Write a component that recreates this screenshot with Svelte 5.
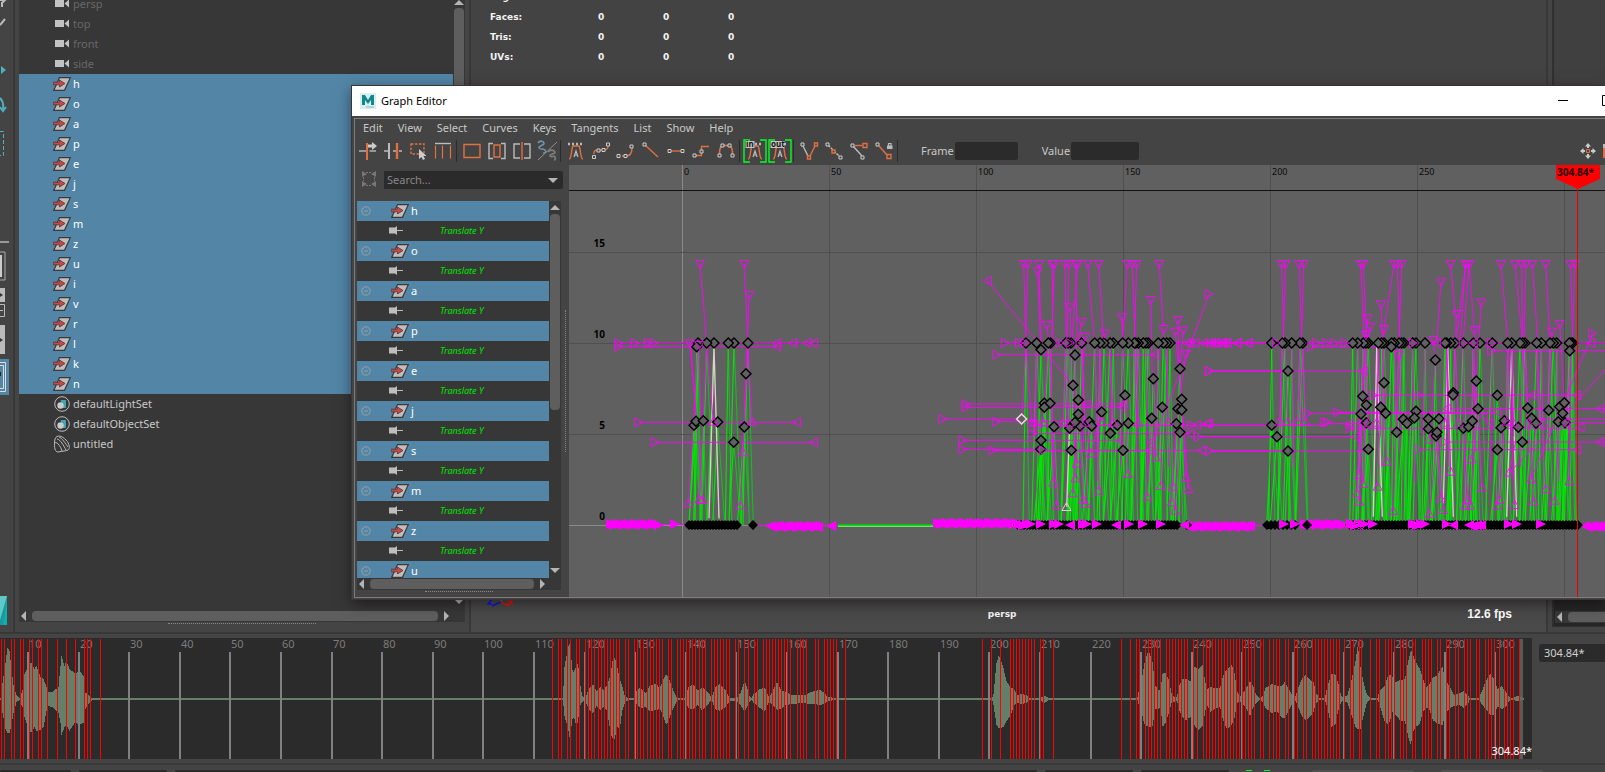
<script>
  const cameras = ['persp', 'top', 'front', 'side'];
  const letters = ['h', 'o', 'a', 'p', 'e', 'j', 's', 'm', 'z', 'u', 'i', 'v', 'r', 'l', 'k', 'n'];
  const channels = letters.slice(0, 10);
  const menus = ['Edit', 'View', 'Select', 'Curves', 'Keys', 'Tangents', 'List', 'Show', 'Help'];
  const stats = ['Edges:', 'Faces:', 'Tris:', 'UVs:'];
  const toolGroups = [
    ['insert', 'add', 'lattice', 'region'],
    ['frameall', 'frameplay', 'center', 'buffer'],
    ['auto', 'spline', 'clamped', 'linear', 'flat', 'step', 'plateau'],
    ['in', 'out'],
    ['break', 'unify', 'free', 'lock']
  ];

  /* ---------- time slider ---------- */
  const tickX = (f) => Math.round(27 + (f - 10) * 5.06);
  const frames = Array.from({ length: 30 }, (_, i) => (i + 1) * 10);

  const from = (origin, scale, list) => list.map((v) => Math.floor(origin + v / scale));
  const keyLines = [
    1, 4, 11, 14, 20, 23, 29, 32, 38, 41, 47, 57, 66, 75, 84, 87, 90, 100,
    ...from(540, 2.851, [35, 52, 61, 78, 86, 104, 112, 129, 138, 146, 155, 166, 175, 184, 192, 200, 209, 217, 226, 243, 252, 269, 278, 286, 294, 306, 314, 323, 332, 340, 349, 366, 375, 392, 400, 409, 417, 426, 434, 443, 454, 462, 471, 488, 497, 506, 514, 523, 531, 540, 557, 565, 582, 594, 611, 620, 637, 645, 654, 662, 671, 679, 688, 697, 705, 714, 734, 742, 751, 759, 785, 794, 811, 819, 828, 836, 845, 871, 1261, 1287, 1312, 1341, 1350, 1358, 1367, 1375, 1384, 1392, 1401, 1410, 1427, 1435, 1464]),
    ...from(1070, 2.931, [150, 177, 194, 203, 221, 230, 238, 247, 256, 265, 282, 291, 300, 309, 318, 326, 335, 344, 361, 373, 391, 399, 408, 417, 425, 434, 443, 452, 461, 470, 479, 488, 496, 505, 514, 523, 532, 541, 558, 567, 584, 596, 605, 613, 631, 640, 657, 666, 684, 693, 710, 719, 728, 737, 746, 754, 763, 772, 781, 790, 804, 822, 831, 848, 854, 880, 898, 907, 924, 933, 942, 951, 968, 977, 986, 1003, 1012, 1033, 1042, 1050, 1059, 1077, 1086, 1103, 1112, 1129, 1138, 1156, 1164, 1173, 1191, 1200, 1217, 1226, 1235, 1244, 1258, 1273, 1282, 1290, 1299, 1317])
  ];

  // audio envelope: position, level above, level below
  const parse = (s, o, k) => s.split(' ').map((t) => { const [x, u, d] = t.split(',').map(Number); return [o + x / k, u, d]; });
  const envelope = [
    ...parse('0,1,1 2,16,14 5,36,30 7,51,34 9,48,34 11,30,26 13,14,14 16,4,3 19,1,1 22,9,8 24,25,18 29,36,33 31,36,33 34,30,28 36,33,32 40,22,31 43,20,28 46,12,12 48,7,7 52,7,8 58,12,14 60,33,24 61,43,36 64,33,28 66,38,26 69,30,32 74,26,24 80,27,25 83,23,24 85,6,10 87,5,6 91,1,2 92,1,1', 0, 1),
    ...parse('64,1,1 68,31,17 75,45,25 82,56,35 84,54,44 88,40,28 92,26,18 96,28,19 103,33,28 107,36,22 112,18,8 118,4,3 127,1,1 138,10,11 150,15,14 160,8,7 170,12,11 180,9,8 190,14,12 200,25,35 206,40,40 212,41,40 218,33,28 226,20,30 233,13,12 240,3,4 250,1,1 268,1,1 275,10,6 285,11,9 300,6,8 312,14,12 330,15,11 340,11,10 350,19,17 358,25,26 365,22,22 372,15,15 383,5,6 390,1,1 412,1,1 422,12,9 434,15,11 448,9,6 460,11,11 470,10,8 483,4,3 488,1,1 497,12,10 512,15,12 525,10,9 535,4,4 540,1,2 560,1,2 570,6,6 582,18,13 588,12,8 597,2,2 602,1,1 608,5,4 625,10,9 640,11,12 652,1,2 660,7,6 675,17,11 685,9,10 700,7,6 715,4,5 755,4,4 765,6,5 780,8,5 797,9,6 810,6,5 818,2,2 845,1,1 1288,1,1 1292,6,7 1300,36,26 1306,43,29 1312,40,29 1320,31,28 1328,18,22 1340,12,17 1350,10,7 1358,4,4 1370,5,5 1385,4,4 1395,1,1 1425,1,1 1437,3,4 1450,1,1', 540, 2.851),
    ...parse('196,1,1 200,8,6 208,17,12 216,35,25 228,49,28 240,38,28 248,14,10 258,9,10 264,10,8 270,26,28 278,26,24 288,20,14 296,6,4 305,2,3 312,2,2 318,13,11 328,20,18 338,20,21 352,18,18 358,30,20 365,32,28 375,30,31 388,34,27 395,17,12 400,10,6 410,12,13 425,11,9 438,11,8 446,22,20 458,30,30 472,34,26 480,28,20 488,8,5 496,2,2 505,6,5 515,11,9 526,18,17 535,13,9 545,4,4 555,1,1 562,2,2 572,11,9 590,15,14 605,13,12 620,13,19 627,17,19 640,10,12 652,3,2 658,1,1 665,9,6 678,20,17 690,24,21 705,18,17 712,17,13 720,6,4 728,1,1 745,1,1 752,11,8 765,25,28 776,25,26 786,14,10 793,4,4 800,1,1 812,4,4 822,17,14 835,37,28 842,54,30 850,32,30 860,15,15 868,5,4 878,1,1 900,1,1 905,8,5 920,13,22 932,25,26 945,22,12 953,17,16 968,19,22 980,20,22 990,38,38 998,49,46 1003,45,34 1012,37,28 1024,30,25 1032,22,13 1042,12,9 1050,13,9 1062,22,21 1073,23,24 1090,32,26 1100,18,14 1112,12,9 1125,4,7 1140,6,6 1153,8,9 1165,4,5 1170,1,1 1197,1,1 1205,7,5 1217,18,10 1230,25,16 1240,21,16 1252,10,8 1264,13,10 1278,6,7 1285,2,2 1298,1,1 1310,3,2 1330,1,1', 1070, 2.931)
  ];
  let wave = '';
  for (let i = 0, x = 0; x < 1524; x++) {
    while (i < envelope.length - 2 && envelope[i + 1][0] < x) i++;
    const [x0, u0, d0] = envelope[i];
    const [x1, u1, d1] = envelope[i + 1];
    const t = Math.min(1, Math.max(0, (x - x0) / (x1 - x0)));
    const u = Math.round(u0 + (u1 - u0) * t);
    const d = Math.round(d0 + (d1 - d0) * t);
    wave += `M${x} ${61 - u}h1v${u + d}h-1z`;
  }

  /* ---------- animation curves ---------- */
  // Three clusters of keys, each in thirds of a pixel from its own origin.
  const clusters = [
    {
      ox: 350, oy: 190, top: 459, base: 1006,
      tops: [1044, 1070, 1092, 1135, 1152, 1194],
      keys: '1040,470 1032,706 1038,694 1060,692 1103,696 1183,711 1188,551 1151,757',
      downs: '1050,222,1070,459 1183,222,1194,459 1198,315,1187,551 1020,460,1040,690 1048,465,1052,690',
      ups: '1015,940,1044,470 1048,928,1070,470 1058,930,1022,470 1171,947,1194,470 1179,787,1188,551 1206,695,1194,470 1090,695,1070,470',
      rights: '806,459 806,470 855,459 895,459 912,459 866,697 915,757',
      lefts: '1280,459 1280,470 1328,459 1371,459 1391,459 1340,697 1391,757',
      lines: '806,459,1391,459 806,470,1280,470 866,697,1340,697 915,757,1391,757',
      pale: '1077,985,1092,470 1092,470,1107,985'
    },
    {
      ox: 900, oy: 240, top: 309, base: 856,
      tops: [378, 410, 445, 452, 497, 505, 513, 545, 584, 600, 612, 630, 640, 668, 685, 703, 707, 715, 730, 738, 745, 775, 790, 800, 810],
      keys: '423,329 525,345 519,436 760,416 840,386 675,466 535,480 433,490 450,490 433,502 787,502 845,478 605,516 834,506 845,510 535,523 462,560 509,565 540,558 568,545 575,558 525,547 652,556 685,550 755,535 631,580 829,551 840,577 422,628 423,601 514,631 669,631',
      downs: '371,72,378,300 383,72,377,300 417,72,424,325 413,94,422,325 457,72,458,300 463,72,455,300 495,72,499,300 507,72,501,300 527,72,531,300 533,72,516,300 563,72,583,300 596,72,610,300 682,72,668,300 697,72,705,300 710,72,703,300 778,72,790,260 440,255,447,309 510,202,513,309 545,245,535,309 555,290,545,440 614,280,608,309 666,232,669,309 752,180,757,416 791,267,790,309 834,240,838,386 826,275,845,478 850,271,840,386 858,342,834,506',
      ups: '405,545,410,309 395,548,378,309 430,548,445,309 490,548,497,309 508,548,513,309 555,548,545,309 605,545,600,309 640,548,630,309 715,548,707,309 805,545,800,309 460,728,450,309 470,797,455,490 530,671,525,345 526,715,519,436 518,760,535,480 550,780,540,558 557,792,568,545 596,752,584,309 684,702,675,466 768,652,760,416 782,738,787,502 742,770,755,535 818,740,834,506 858,713,845,510 865,747,845,478 815,787,829,551 825,812,840,577 572,640,605,516',
      rights: '316,309 358,309 375,309 480,309 510,309 540,309 290,344 198,492 198,502 128,537 290,545 415,560 398,581 188,601 188,628 278,631 430,631 895,590 930,633 928,393 927,162 875,555',
      lefts: '860,309 870,309 885,309 910,309 935,309 950,309 965,309 980,309 1012,309 1045,309 765,344 560,492 670,492 665,502 890,556 920,551 870,581 660,601 750,631 905,631 262,122 755,605',
      lines: '316,309,1110,309 290,344,765,344 198,492,670,492 198,502,665,502 128,537,365,537 290,545,510,545 415,556,1115,556 398,581,870,581 895,590,1130,590 188,601,660,601 188,628,422,628 278,631,905,631 278,632,750,632 930,633,1163,633 928,393,1163,393 262,122,519,436 927,162,840,400 840,400,755,610 365,537,378,309',
      pale: '508,580,500,800'
    },
    {
      ox: 1200, oy: 240, top: 309, base: 856,
      tops: [215, 247, 255, 275, 300, 308, 458, 473, 490, 498, 505, 535, 545, 552, 575, 583, 597, 605, 612, 638, 648, 675, 735, 740, 752, 765, 790, 820, 840, 877, 923, 935, 960, 968, 975, 1010, 1024, 1050, 1060, 1070, 1108, 1113, 1118],
      keys: '264,393 552,428 706,360 574,320 488,469 499,495 542,502 557,520 483,522 760,458 759,465 829,423 892,466 834,506 648,514 643,534 610,538 621,550 685,536 717,536 685,566 708,588 711,577 590,577 215,556 231,590 264,633 499,548 505,628 790,565 806,560 817,543 903,563 913,542 892,629 967,606 983,504 995,535 1008,550 955,562 1046,511 1079,500 1093,488 1075,545 1095,548 1088,520 1109,332',
      downs: '245,72,251,300 257,72,250,300 298,72,305,300 311,72,304,300 482,72,493,300 490,72,500,300 582,72,553,265 592,72,599,300 605,72,597,300 752,72,765,220 797,72,780,300 797,72,768,300 807,72,823,270 807,72,790,300 903,72,923,300 945,72,967,300 965,72,968,300 978,72,972,300 997,72,1013,300 1037,72,1050,300 1112,72,1118,300 1125,72,1117,300 723,125,710,300 543,193,547,300 552,267,545,500 769,222,767,309 844,187,829,420 823,270,815,540 502,235,495,309 511,260,505,309 1079,252,1093,488 1056,275,1046,511 497,285,488,469 700,300,706,360 598,345,590,577',
      ups: '239,545,247,309 263,545,255,309 293,545,300,309 317,545,308,309 505,548,498,309 530,548,535,309 735,548,740,309 775,548,765,309 920,545,923,309 940,548,935,309 985,548,975,309 1030,548,1024,309 1100,548,1113,309 560,665,552,428 478,705,488,469 490,732,499,495 533,740,542,502 470,760,483,522 478,785,490,309 580,813,597,309 689,598,706,360 752,695,740,309 815,658,829,423 722,775,708,588 730,810,711,577 688,822,717,536 804,780,790,565 795,797,790,309 810,797,834,506 846,742,820,309 899,780,913,542 892,797,903,563 944,795,923,309 1001,785,968,309 1037,747,1010,309 1064,782,1079,500 1108,723,1113,309 993,718,1008,550 928,698,955,562',
      rights: '350,309 380,309 405,309 435,309 230,309 640,309 790,309 335,320 28,393 522,466 658,466 323,520 413,517 383,547 375,547 450,565 735,606 655,629 875,332 1178,280 875,309',
      lefts: '25,309 45,309 70,309 80,309 112,309 145,309 1172,309 490,393 995,466 1130,466 890,517 850,530 450,550 450,560 870,550 1140,562 465,590 1200,606 1130,629 740,506 1200,506 25,551 710,309 820,309',
      lines: '0,309,1250,309 335,320,574,320 28,393,490,393 522,466,1140,466 323,520,890,520 413,517,850,517 375,551,480,551 0,556,380,556 450,565,1140,565 0,590,465,590 735,606,1250,606 30,633,505,633 655,629,1130,629 875,332,1250,332 750,506,1250,506 980,537,1250,537 1080,548,1250,548 928,698,1080,540 1080,540,1250,350 993,718,1178,280',
      pale: '520,830,530,320 530,320,547,830 730,790,743,320 743,320,760,830 920,830,935,330 935,330,950,830'
    }
  ];
  const nums = (s) => s.split(' ').map((t) => t.split(',').map(Number));
  const r1 = (v) => Math.round(v * 10) / 10;

  let greens = '', greensSoft = '', pales = '', magentas = '', handles = '';
  const diamonds = [];
  for (const c of clusters) {
    const X = (v) => r1(c.ox + v / 3);
    const Y = (v) => r1(c.oy + v / 3);
    const keys = [...c.tops.map((x) => [x, c.top]), ...nums(c.keys)];
    keys.forEach(([x, y], i) => {
      const a = 9 + ((i * 7) % 3) * 6;
      const b = 10 + ((i * 5) % 3) * 6;
      greens += `M${X(x - a)} ${Y(c.base)}L${X(x)} ${Y(y)}`;
      greensSoft += `M${X(x)} ${Y(y)}L${X(x + b)} ${Y(c.base)}`;
      if (y > c.top) diamonds.push([X(x), Y(y)]);
      else diamonds.unshift([X(x), Y(y)]);
      if (c.tops.length > 9 && y === c.top && i % 2) magentas += `M${X(x)} ${Y(y)}L${X(x + (i % 4) * 6 - 12)} ${Y(545 + (i % 5) * 45)}`;
    });
    for (const [x1, y1, x2, y2] of nums(c.pale)) pales += `M${X(x1)} ${Y(y1)}L${X(x2)} ${Y(y2)}`;
    for (const [x1, y1, x2, y2] of [...nums(c.lines), ...nums(c.downs), ...nums(c.ups)])
      magentas += `M${X(x1)} ${Y(y1)}L${X(x2)} ${Y(y2)}`;
    for (const [x, y] of nums(c.downs)) handles += `M${X(x) - 4.5} ${Y(y) - 3.5}h9l-4.5 8z`;
    for (const [x, y] of nums(c.ups)) handles += `M${X(x) - 4.5} ${Y(y) + 3.5}h9l-4.5 -8z`;
    for (const [x, y] of nums(c.rights)) handles += `M${X(x) - 4} ${Y(y) - 4.5}v9l8 -4.5z`;
    for (const [x, y] of nums(c.lefts)) handles += `M${X(x) + 4} ${Y(y) - 4.5}v9l-8 -4.5z`;
  }

  let solid = '', baseKeys = '', overlay = '';
  const right = (x, y) => `M${x} ${y - 5}v10l10 -5z`;
  const left = (x, y) => `M${x} ${y - 5}v10l-10 -5z`;
  const diamond = (x, y, r = 5) => `M${x - r} ${y}l${r} -${r}l${r} ${r}l-${r} ${r}z`;
  const arrows = (shape, a, b, y, s = 3) => { let d = ''; for (let x = a, i = 0; x < b; x += s, i++) d += shape(x, y + (i % 3 === 1 ? 1 : 0)); return d; };
  solid += arrows(right, 606, 656, 524) + right(670, 524);
  solid += arrows(left, 775, 826, 526) + left(836, 526);
  solid += arrows(right, 933, 1012, 523);
  solid += arrows(left, 1192, 1258, 526);
  solid += arrows(right, 1300, 1342, 524) + arrows(left, 1590, 1612, 526);
  const runs = [[689, 740, 3], [753, 754, 3], [1018, 1178, 3], [1187, 1188, 3], [1267, 1299, 4], [1307, 1308, 3], [1350, 1580, 3]];
  for (const [a, b, s] of runs) for (let x = a; x < b; x += s) baseKeys += diamond(x, 525, 5);
  const mixed = [1040, 1053, 1058, 1070, 1082, 1086, 1096, 1116, 1128, 1142, 1160, 1184, 1283, 1294, 1351, 1358, 1364, 1372, 1446, 1453, 1508, 1516, 1540];
  overlay += mixed.map((x, i) => (i % 4 === 3 ? left(x + 5, 525) : right(x - 4, 524))).join('');
  overlay += arrows(right, 1014, 1030, 524, 4) + arrows(right, 1346, 1362, 524, 4) + arrows(right, 1408, 1424, 524, 4) + arrows(left, 1474, 1490, 525, 4);

  const gridX = [0, 50, 100, 150, 200, 250, 300].map((f) => ({ f, x: 682 + (f / 50) * 147 }));
  const gridY = [15, 10, 5, 0].map((v) => ({ v, y: 525 - Math.round(v * 18.2) }));
</script>

{#snippet transformIcon()}
  <svg class="xf" width="18" height="14" viewBox="0 0 18 14" aria-hidden="true">
    <path d="M6.500.7h10.800L11.500 13.300H.8z" fill="#c2bdbd" stroke="#3a3a3a" stroke-width="1.200" />
    <path d="M0 5.200h6.500V3l5.500 3.500L6.500 10V7.800H0z" fill="#d04545" stroke="#4a3a3a" stroke-width=".8" />
  </svg>
{/snippet}

{#snippet tool(name)}
  <svg width="24" height="24" viewBox="0 0 24 24" fill="none" stroke="#e07040" stroke-width="1.400" aria-hidden="true">
    {#if name === 'insert'}
      <path d="M3 12h17" stroke="#bbb" /><path d="M12 4v17" stroke-width="3" stroke="#444" /><path d="M11 4v17" stroke-width="2" /><path d="M12 5.500h4V3l5 4-5 4V8.500h-4z" fill="#ccc" stroke="none" />
    {:else if name === 'add'}
      <path d="M3 12h5M12 12h3M18 12h3" stroke="#bbb" /><path d="M8 4v16" stroke="#bbb" stroke-width="2" /><path d="M16 4v16" stroke-width="2.400" />
    {:else if name === 'lattice'}
      <path d="M5 5h13v10H5z" stroke-dasharray="2.500 1.500" /><path d="M13 10v10l2.500-2 1.500 3 2-1-1.500-3h3z" fill="#ccc" stroke="none" />
    {:else if name === 'region'}
      <path d="M4 4.500h16" stroke="#bbb" /><path d="M4.500 6.500v13M11.500 6.500v13M19.500 6.500v13" stroke-width="1.200" />
    {:else if name === 'frameall'}
      <path d="M4 5.500h16v13H4z" />
    {:else if name === 'frameplay'}
      <path d="M8 4.500H4v15h4M16 4.500h4v15h-4" stroke="#bbb" /><path d="M9 6h6v12H9z" />
    {:else if name === 'center'}
      <path d="M10 5H4v14h6M14 5h6v14h-6" stroke="#bbb" /><path d="M12 3v18" />
    {:else if name === 'buffer'}
      <path d="M3 4c2-3 5-2 6 0s-6 3-5 5 4 0 6 2 0 3-2 3" stroke="#7191ad" stroke-width="1.600" /><path d="M22 3 3 21" stroke="#999" stroke-width=".9" /><path d="M13 13c2-3 6-2 7 0s-6 2-5 4 4-1 5 1 0 3-1 3" stroke="#808080" stroke-width="1.600" />
    {:else if name === 'auto' || name === 'in' || name === 'out'}
      <path d="M5 20c3 0 2-10 4-13h6c2 3 1 13 4 13" /><path d="m10 18 2-6 2 6M10.500 16h3" stroke="#bbb" stroke-width="1.200" /><path d="M4 5h16" stroke="#bbb" stroke-dasharray="2 2" stroke-width="2.500" />
      {#if name !== 'auto'}
        <path d="M7 1H1v22h6M17 1h6v22h-6" stroke="#0f2" />
        <rect x="2.500" y="2" width={name === 'in' ? 9 : 14} height="7" fill="#c4c4c4" stroke="none" />
        <text x="3" y="8" fill="#111" stroke="none" font-size="8" font-weight="700">{name}</text>
      {/if}
    {:else if name === 'spline'}
      <path d="M5 15v-1c0-3 2-3 5-3h4c4 0 5-1 5-4" /><path d="M3.500 16.500h3v3h-3zM8 10h3v3H8zM13 9.500h3v3h-3zM17.500 4h3v3h-3z" fill="#444" stroke="#ccc" stroke-width="1" />
    {:else if name === 'clamped'}
      <path d="M8 17h4c5 0 6-4 6-8" /><path d="M3 15.500h3v3H3zM10 15.500h3v3h-3zM16 6h3v3h-3z" fill="#444" stroke="#ccc" stroke-width="1" />
    {:else if name === 'linear'}
      <path d="m6 6 13 12" /><path d="M4 4h3v3H4z" fill="#444" stroke="#ccc" stroke-width="1" />
    {:else if name === 'flat'}
      <path d="M7 12h10" /><path d="M4 10.500h3v3H4zM17 10.500h3v3h-3z" fill="#444" stroke="#ccc" stroke-width="1" />
    {:else if name === 'step'}
      <path d="M7 16.500h5.500v-9H20" /><path d="M4 15h3v3H4zM11 11h3v3h-3z" fill="#444" stroke="#ccc" stroke-width="1" />
    {:else if name === 'plateau'}
      <path d="M5.500 15c0-4 0-7 3-8.500h7c3 1.500 3 4.500 3 8.500" /><path d="M4 15h3v3H4zM7 5h3v3H7zM14 5h3v3h-3zM17 15h3v3h-3z" fill="#444" stroke="#ccc" stroke-width="1" />
    {:else if name === 'break'}
      <path d="m6 7 5 10" stroke="#bbb" /><path d="m18 7-5 10" /><path d="M4 4h3v3H4z" fill="#444" stroke="#ccc" stroke-width="1" /><path d="M17.500 4h3v3h-3zM10.500 17h3v3h-3z" fill="#444" />
    {:else if name === 'unify'}
      <path d="m6 6 12 12" stroke="#bbb" stroke-dasharray="3 1" /><path d="M4 4h3v3H4zM17 17h3v3h-3z" fill="#444" stroke="#ccc" stroke-width="1" /><path d="M10 11h3v3h-3z" fill="#444" />
    {:else if name === 'free'}
      <path d="m6 7 9 10" stroke="#bbb" /><path d="M8 6.500h7" /><path d="M4 5h3v3H4zM14 17h3v3h-3z" fill="#444" stroke="#ccc" stroke-width="1" /><path d="M16 4.500h4v4h-4z" fill="#444" />
    {:else}
      <path d="m7 7 8 9" /><path d="M4 4h3v3H4z" fill="#444" stroke="#ccc" stroke-width="1" /><path d="M15 15.500h4v4h-4z" fill="#444" /><path d="M15 6.500h5.500V10H15z" fill="#bbb" stroke="none" /><path d="M16.500 7V4.500H19V7" stroke="#bbb" stroke-width="1.200" />
    {/if}
  </svg>
{/snippet}

<div class="app">
  <main class="workspace">
    <svg class="toolbox" width="13" height="632" aria-hidden="true">
      <path d="M0 0h5l-3 3v4M0 25l5-6" stroke="#bbb" stroke-width="2" fill="none" />
      <path d="M1 66l5 4-5 4z" fill="#4fb0bf" />
      <path d="M0 98q4 4 3 11M0 107l3 4 3-4" stroke="#4fb0bf" stroke-width="2" fill="none" />
      <path d="M0 131.500h3.500v24H0" stroke="#4fb0bf" fill="none" stroke-dasharray="4 2" />
      <path d="M0 242h9" stroke="#999" stroke-width="2" />
      <path d="M0 252h5v28H0" stroke="#aaa" fill="none" /><path d="M0 255h2v22H0z" fill="#ccc" />
      <path d="M0 288h5v14H0zM0 325h5v29H0z" fill="#bbb" /><path d="M0 293l3 2-3 2zM0 338l3 2-3 2z" fill="#333" />
      <path d="M0 304.500h4.500v12H0M0 310.500h3" stroke="#bbb" fill="none" />
      <path d="M0 359h9v36H0z" fill="#5285a6" /><path d="M0 362.500h5.500v29H0M0 365.500h3.500v23H0" stroke="#ddd" fill="none" /><path d="M0 372h1v4H0z" fill="#222" />
      <path d="M0 596h7v29H0z" fill="#1a9a9a" /><path d="M0 596h7L0 620z" fill="#5fc8c8" /><path d="M7 600v25H3z" fill="#0bb0b0" />
    </svg>

    <section class="outliner" aria-label="Outliner">
      <div class="treebox">
        <ul class="tree">
          {#each cameras as c}
            <li class="row dim">
              <svg width="18" height="14" viewBox="0 0 18 14" aria-hidden="true"><path d="M2 3h9v7H2zM11.500 6.500 16 2.500v8z" fill="#c2c2c2" /></svg>{c}
            </li>
          {/each}
          {#each letters as l}<li class="row on">{@render transformIcon()}{l}</li>{/each}
          {#each ['defaultLightSet', 'defaultObjectSet'] as s}
            <li class="row">
              <svg width="18" height="16" viewBox="0 0 18 16" aria-hidden="true"><circle cx="9" cy="8" r="7.300" fill="none" stroke="#bdbdbd" /><path d="M7.500 4h5.500v8h-3z" fill="#3fa5b0" /><circle cx="7.500" cy="9.500" r="3.200" fill="#ccc" /></svg>{s}
            </li>
          {/each}
          <li class="row">
            <svg width="18" height="18" viewBox="0 0 18 18" fill="none" stroke="#bdbdbd" aria-hidden="true"><path d="M2 4C4-1 9 1 13 5s4 9 2 10-5 1-10 2C1 17 1 9 2 4z" /><path d="M2 8c2-2 6 4 7 8M4 4c3 0 7 7 9 11M6 2c3 1 6 6 9 10" /></svg>untitled
          </li>
        </ul>
        <div class="vbar">
          <span class="arrow up"></span><span class="thumb"></span><span class="arrow down"></span>
        </div>
      </div>
      <div class="hbar"><span class="arrow left"></span><span class="thumb"></span><span class="arrow right"></span><span class="corner"></span></div>
      <div class="dots wide"></div>
    </section>

    <section class="viewport" aria-label="Viewport">
      <table class="stats">
        <tbody>
          {#each stats as s}<tr><th scope="row">{s}</th><td>0</td><td>0</td><td>0</td></tr>{/each}
        </tbody>
      </table>
      <div class="viewfoot">
        <svg width="28" height="14" viewBox="0 0 28 14" fill="none" aria-hidden="true"><path d="M14 1v3" stroke="#0c0" /><path d="m14 4-9 4M1 1h4L1 6h4" stroke="#11e" stroke-width="1.500" /><path d="m14 4 8 4M21 2l5 5M26 2l-5 5" stroke="#e11" stroke-width="1.500" /></svg>
        <span class="cam">persp</span><span class="fps">12.6 fps</span>
      </div>
    </section>

    <aside class="side"><div class="sidebar"><div class="hbar"><span class="arrow left"></span><span class="thumb"></span></div></div></aside>

    <section class="editor" aria-label="Graph Editor">
      <header class="titlebar">
        <svg width="16" height="16" viewBox="0 0 16 16" aria-hidden="true"><path d="M0 0h16v16H0z" fill="#d9eeee" /><path d="M2 12V2h3l3 5 3-5h3v10h-3V7l-3 4-3-4v5z" fill="#12888c" /><path d="M6 14h8" stroke="#7bc1c3" /></svg>
        <h1>Graph Editor</h1>
        <button class="win" aria-label="Minimize"><svg width="12" height="12"><path d="M1 5.500h10" stroke="#000" /></svg></button>
        <button class="win max" aria-label="Maximize"><svg width="12" height="12"><path d="M.5.5h10v10H.5z" stroke="#000" fill="none" /></svg></button>
      </header>

      <div class="frame">
        <nav class="menus">{#each menus as m}<button>{m}</button>{/each}</nav>

        <div class="tools">
          {#each toolGroups as g}
            {#each g as t}<button aria-label={t}>{@render tool(t)}</button>{/each}
            <span class="sep"></span>
          {/each}
          <label class="field first">Frame <input type="text" class="f1" /></label>
          <label class="field">Value <input type="text" class="f2" /></label>
          <span class="grow"></span>
          <button class="move" aria-label="Move keys"><svg width="24" height="24" viewBox="0 0 24 24" aria-hidden="true"><path d="M12 4 9 7.500h2V9h2V7.500h2zM12 20l-3-3.500h2V15h2v1.500h2zM4 12l3.500-3v2H9v2H7.500v2zM20 12l-3.500-3v2H15v2h1.500v2z" fill="#ccc" /><path d="M10.500 10.500h3v3h-3z" fill="none" stroke="#e07040" /></svg></button>
          <span class="cut"></span>
        </div>

        <div class="body">
          <div class="left">
            <div class="search">
              <svg width="16" height="16" viewBox="0 0 16 16" fill="none" stroke="#777" aria-hidden="true"><path d="M5 1.500h6M5 14.500h6M2.500 6v4M13.500 6v4" stroke-dasharray="2 1" /><path d="M1 0l5 3-5 3zM15 0l-5 3 5 3zM1 16l5-3-5-3zM15 16l-5-3 5-3z" fill="#777" stroke="none" /></svg>
              <div class="combo"><input type="text" placeholder="Search..." aria-label="Search" /><span class="arrow down"></span></div>
            </div>
            <div class="channelbox">
              <ul class="channels">
                {#each channels as c}
                  <li class="row on">
                    <svg width="10" height="10" viewBox="0 0 10 10" fill="none" stroke="#9aa0a2" aria-hidden="true"><circle cx="5" cy="5" r="4.200" /><path d="M3 5h4" /></svg>
                    {@render transformIcon()}{c}
                  </li>
                  <li class="row attr">
                    <svg width="14" height="10" viewBox="0 0 14 10" aria-hidden="true"><path d="M0 1.500h6L8 0v9L6 7.500H0zM8 4h6v1H8z" fill="#bdbdbd" /></svg>
                    Translate Y
                  </li>
                {/each}
              </ul>
              <div class="vbar"><span class="arrow up"></span><span class="thumb"></span><span class="grow"></span><span class="arrow down"></span></div>
            </div>
            <div class="hbar"><span class="arrow left"></span><span class="thumb"></span><span class="arrow right"></span><span class="corner"></span></div>
            <div class="dots"></div>
          </div>
          <div class="splitter"><span></span></div>

          <div class="graph">
            <svg width="100%" height="100%" aria-label="Animation curves">
              <g transform="translate(-569 -165)">
                {#each gridX as g}
                  <path d="M{g.x + 0.5} 165V597" stroke={g.f === 0 ? '#8a8a8a' : '#505050'} />
                  {#if g.f < 300}<text x={g.x + 2} y="175" class="tick">{g.f}</text>{/if}
                {/each}
                {#each gridY as g}
                  <path d="M569 {g.y + 0.5}H2400" stroke={g.v === 0 ? '#8a8a8a' : '#505050'} />
                  <text x="605" y={g.y - 5} class="val">{g.v}</text>
                {/each}
                <path d="M569 190.500H2400" stroke="#111" />

                <path d={greensSoft} stroke="#16bc20" stroke-width="1.100" fill="none" />
                <path d={greens} stroke="#00e600" stroke-width="1.100" fill="none" />
                <path d={pales} stroke="#efc4da" stroke-width="1.300" fill="none" />
                <path d={magentas} stroke="#f0f" stroke-width="1" stroke-opacity=".9" fill="none" />
                {#each diamonds as [x, y]}<path d={diamond(x, y)} fill="#606060" stroke="#000" stroke-width="1.400" />{/each}
                <path d={handles} stroke="#f0f" stroke-width=".9" fill="none" />

                <path d="M838 526.500H934" stroke="#f5d0e2" /><path d="M838 525.500H934" stroke="#00e600" stroke-width="2" />
                <path d="M606 524.500H690M753 525.500H838M933 524.500H1020M1180 525.500H1270M1300 524.500H1350M1580 525.500H2400" stroke="#f0f" />
                <path d={solid} fill="#f0f" />
                <path d={baseKeys} fill="#000" />
                <path d={overlay} fill="#f0f" />
                <path d={diamond(1021.6, 419)} fill="#606060" stroke="#fbd3e6" stroke-width="1.500" />
                <path d="M1062 510.500h9l-4.500-8z" fill="none" stroke="#efc4da" />

                <path d="M1577.500 188V597" stroke="#e00" />
                <path d="M1556 165h44v14l-22 10-22-10z" fill="#f00" />
                <text x="1557" y="176" class="now">304.84*</text>
              </g>
            </svg>
          </div>
        </div>
      </div>
    </section>
  </main>

  <section class="timeline" aria-label="Time slider">
    <div class="slider">
      <svg width="100%" height="121" aria-hidden="true">
        <path d={wave} fill="#657f69" />
        {#each frames as f}
          <path d="M{tickX(f) + 1} 14V121" stroke="#808080" stroke-width="2" />
          <text x={tickX(f) + 2} y="10" class="num">{f}</text>
        {/each}
        <path d="M1521.500 1V121" stroke="#666" stroke-opacity=".8" stroke-width="3" />
        {#each keyLines as x}<path d="M{x + 0.5} 1V121" stroke="#f00" />{/each}
      </svg>
      <output class="cur">304.84*</output>
    </div>
    <input class="time" type="text" aria-label="Current time" value="304.84*" />
  </section>

  <footer class="range">
    <span style:width="71px"></span><span style:width="88px"></span><span class="track"></span>
    <span style:width="88px"></span><span style:width="88px"></span><i></i>
    <span class="lite"></span><span class="lite"></span>
  </footer>
</div>

<style>
  :global(body) { margin: 0; background: #444; overflow: hidden; }
  .app {
    display: flex; flex-direction: column; height: 100vh; overflow: hidden;
    background: #444; color: #c8c8c8; font: 11px/20px 'Noto Sans', 'Open Sans', sans-serif;
  }
  ul { list-style: none; margin: 0; padding: 0; }
  button { padding: 0; border: 0; background: none; color: inherit; font: inherit; }
  input { box-sizing: border-box; border: 0; border-radius: 2px; background: #2b2b2b; color: #d0d0d0; font: inherit; outline: 0; }
  svg { display: block; flex: none; }
  .grow { flex: 1; }

  .workspace { position: relative; flex: 1; min-height: 0; display: flex; overflow: hidden; }
  .toolbox { border-right: 2px solid #383838; }

  .outliner { flex: none; width: 446px; margin-left: 4px; padding-right: 4px; display: flex; flex-direction: column; border-right: 2px solid #383838; }
  .treebox { flex: 1; min-height: 0; display: flex; background: #373737; overflow: hidden; }
  .tree { flex: 1; margin-top: -6px; }
  .row { display: flex; align-items: center; height: 20px; white-space: nowrap; }
  .tree .row { gap: 2px; padding-left: 34px; }
  .on { background: #5285a6; color: #fff; }
  .dim { color: #686868; }

  .vbar { flex: none; width: 12px; display: flex; flex-direction: column; align-items: center; background: #373737; }
  .vbar .thumb { width: 10px; border-radius: 4px; background: #5e5e5e; }
  .treebox .vbar .thumb { flex: 1; margin: 3px 0 200px; }
  .treebox .vbar .down { margin-bottom: 6px; }
  .hbar { flex: none; height: 12px; display: flex; align-items: center; gap: 6px; padding-left: 2px; background: #373737; }
  .hbar .thumb { flex: 1; height: 10px; border-radius: 4px; background: #5e5e5e; }
  .corner { width: 10px; }
  .arrow { flex: none; width: 0; height: 0; border: 5px solid transparent; }
  .up { border-width: 0 5px 5px; border-bottom-color: #b5b5b5; }
  .down { border-width: 5px 5px 0; border-top-color: #b5b5b5; }
  .left.arrow { border-width: 5px 5px 5px 0; border-right-color: #b5b5b5; }
  .right { border-width: 5px 0 5px 5px; border-left-color: #b5b5b5; }
  .dots { width: 68px; margin: 1px auto 0; border-top: 1px dotted #888; height: 5px; }
  .dots.wide { width: 148px; height: 8px; }

  .viewport { flex: 1; min-width: 0; display: flex; flex-direction: column; justify-content: space-between; padding: 0 34px 0 16px; background: linear-gradient(#434343 80%, #4a4a4a); font: 700 9px/20px 'DejaVu Sans', sans-serif; color: #f4f4f4; }
  .stats { align-self: flex-start; margin-top: -13px; margin-left: 3px; border-collapse: collapse; }
  .stats th, .stats td { padding: 0; text-align: left; height: 20px; line-height: 18px; width: 65px; }
  .stats th { width: 108px; }
  .viewfoot { display: flex; justify-content: space-between; height: 34px; line-height: 32px; }
  .cam { margin-left: 22px; }
  .fps { font: 700 12px/32px 'Liberation Sans', sans-serif; color: #fff; }

  .side { flex: none; width: 53px; border-left: 2px solid #383838; padding: 0 0 5px 4px; display: flex; }
  .sidebar { flex: 1; display: flex; flex-direction: column; justify-content: flex-end; border: 2px solid #303030; border-width: 0 0 1px 2px; background: linear-gradient(#404040 50%, #262626 50%); padding: 0 0 3px 1px; }
  .sidebar .thumb { border-radius: 4px 0 0 4px; }

  .editor { position: absolute; inset: 86px 0 33px 352px; display: flex; flex-direction: column; background: #444; box-shadow: 0 0 0 1px #3b3434, 0 4px 14px rgba(0, 0, 0, .5); }
  .titlebar { flex: none; height: 30px; display: flex; align-items: center; gap: 5px; padding-left: 8px; background: #fff; color: #000; overflow: hidden; line-height: 18px; }
  .titlebar h1 { flex: 1; margin: 0; font: inherit; }
  .win { width: 12px; margin-right: 28px; }
  .max { margin-right: -9px; }
  .frame { flex: 1; min-height: 0; margin: 2px 0 1px 2px; border: 1px solid #7c7c7c; border-right: 0; display: flex; flex-direction: column; }
  .menus { flex: none; height: 18px; display: flex; gap: 15px; padding-left: 8px; line-height: 18px; }
  .tools { flex: none; height: 28px; display: flex; align-items: center; overflow: hidden; }
  .tools button { flex: none; width: 25px; display: flex; justify-content: center; }
  .sep { flex: none; width: 1px; height: 22px; margin: 0 2px 0 1px; background: #2b2b2b; }
  .field { display: flex; align-items: center; gap: 1px; margin-left: 24px; }
  .field.first { margin-left: 21px; }
  .field input { height: 18px; }
  .f1 { width: 63px; }
  .f2 { width: 68px; }
  .cut { width: 2px; height: 14px; margin-left: 3px; background: linear-gradient(#bbb 4px, #e07040 4px); }

  .body { flex: 1; min-height: 0; display: flex; }
  .left:not(.arrow) { flex: none; width: 204px; padding-left: 2px; display: flex; flex-direction: column; }
  .search { height: 36px; display: flex; align-items: flex-start; gap: 7px; padding: 6px 2px 0 4px; box-sizing: border-box; }
  .combo { flex: 1; display: flex; align-items: center; height: 18px; padding-right: 5px; border-radius: 2px; background: #2b2b2b; }
  .combo input { flex: 1; min-width: 0; height: 18px; padding: 0 3px; }
  .combo input::placeholder { color: #888; }
  .channelbox { flex: 1; min-height: 0; display: flex; overflow: hidden; background: #373737; }
  .channels { flex: 1; }
  .channels .row { padding-left: 4px; gap: 2px; }
  .channels .row :global(.xf) { margin-left: 18px; }
  .channels .attr { padding-left: 32px; gap: 37px; color: #00e600; font-size: 9px; font-style: italic; }
  .channelbox .vbar .thumb { height: 196px; }
  .channelbox .up { margin: 4px 0; }
  .channelbox .down { margin-bottom: 5px; }
  .splitter { flex: none; width: 8px; display: flex; justify-content: center; align-items: center; }
  .splitter span { height: 142px; border-left: 1px dotted #888; }
  .graph { flex: 1; min-width: 0; overflow: hidden; background: #606060; }
  .tick { font-size: 9px; fill: #0a0a0a; }
  .val { font-size: 10px; font-weight: 700; text-anchor: end; fill: #000; }
  .now { font-size: 10px; font-weight: 700; fill: #200; }

  .timeline { flex: none; display: flex; align-items: flex-start; gap: 7px; padding: 4px 0; border-top: 2px solid #383838; border-bottom: 2px solid #383838; }
  .slider { position: relative; flex: 1; background: #2b2b2b; overflow: hidden; }
  .num { font-size: 11px; fill: #7b7b7b; }
  .cur { position: absolute; right: 0; bottom: 0; line-height: 16px; color: #fff; }
  .time { flex: none; width: 66px; height: 18px; margin-top: 6px; padding: 0 5px; border-radius: 3px 0 0 3px; }

  .range { flex: none; height: 2px; padding-top: 5px; display: flex; gap: 8px; overflow: hidden; }
  .range span { flex: none; background: #2b2b2b; border-radius: 3px 3px 0 0; }
  .range .track { flex: 1; }
  .range i { width: 24px; margin: 0 34px 0 9px; background: linear-gradient(90deg, #0f2 6px, transparent 6px 18px, #0f2 18px) 0 0 / 100% 1px no-repeat; }
  .range .lite { width: 102px; margin-right: 19px; background: #505050; }
  .range .lite:last-child { margin-right: 62px; }
</style>
